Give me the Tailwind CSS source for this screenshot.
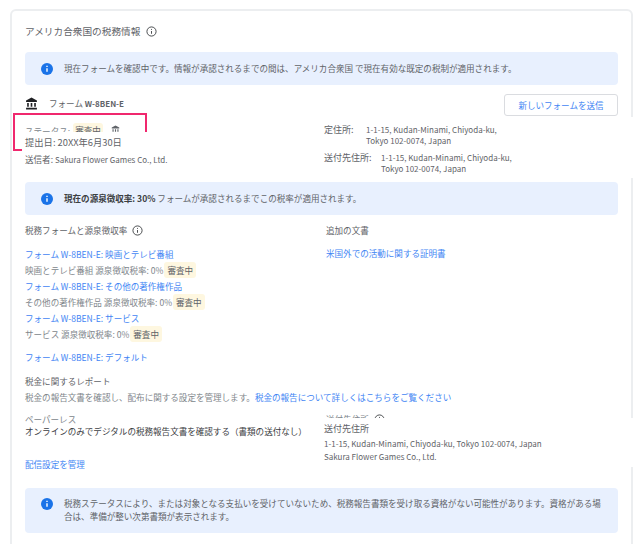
<!DOCTYPE html>
<html lang="ja">
<head>
  <meta charset="UTF-8" />
  <title>税務情報</title>
  <script src="https://cdn.jsdelivr.net/npm/@tailwindcss/browser@4"></script>
</head>
<body class="bg-white h-[544px] overflow-hidden relative text-[#5f6368] text-[8.55px] font-['Noto_Sans_CJK_JP',sans-serif]">

  <div class="absolute left-[13px] top-[113px] w-[134px] h-[38px] border-2 border-[#f0286e] z-10"></div>

  <main class="ml-[10px] mt-[9px] w-[623px] h-[600px] border-2 border-[#eceef0] rounded-[6px] px-[13px] pt-[11px]">
    <div class="flex items-center gap-[6px] h-[18px] text-[9.67px]">
      <h1 class="font-normal">アメリカ合衆国の税務情報</h1>
      <svg class="w-[11px] h-[11px]" viewBox="0 0 12 12" fill="none" stroke="#3c4043"><circle cx="6" cy="6" r="5"/><path d="M6 5.500v3M6 3.200v1"/></svg>
    </div>

    <div class="mt-[12px] h-[33px] bg-[#e8f0fe] rounded-[4px] flex items-center pl-[16px] gap-[11px]">
      <svg class="w-[12px] h-[12px] shrink-0" viewBox="0 0 12 12"><circle cx="6" cy="6" r="6" fill="#1a73e8"/><path d="M6 5.300v3.400M6 2.800v1.200" stroke="#fff" stroke-width="1.400"/></svg>
      <p class="mb-[1px]">現在フォームを確認中です。情報が承認されるまでの間は、アメリカ合衆国 で現在有効な既定の税制が適用されます。</p>
    </div>

    <div class="mt-[9px] flex items-start justify-between h-[22px]">
      <div class="flex items-center gap-[11px] mt-[3px]">
        <svg class="w-[13px] h-[13px]" viewBox="0 0 24 24" fill="#202124"><path d="M12 1 2 6.500V9h20V6.500zM4 11v7h3v-7zM10.500 11v7h3v-7zM17 11v7h3v-7zM2 20v3h20v-3z"/></svg>
        <p>フォーム <span class="font-semibold text-[8px]">W-8BEN-E</span></p>
      </div>
      <button class="w-[114px] h-[22px] border border-[#dadce0] rounded-[3px] bg-white text-[#4285f4]">新しいフォームを送信</button>
    </div>

    <div class="mt-[7px] h-[59px] flex items-start gap-[3px] text-[#80868b]">
      <span class="mt-[2px]">ステータス:</span>
      <span class="bg-[#fef7e0] rounded-[3px] px-[2px] py-[1px] text-[#5f6368]">審査中</span>
      <svg class="w-[9px] h-[9px] ml-[5px] mt-[2px]" viewBox="0 0 24 24" fill="#5f6368"><path d="M12 1 2 6.500V9h20V6.500zM4 11v7h3v-7zM10.500 11v7h3v-7zM17 11v7h3v-7zM2 20v3h20v-3z"/></svg>
    </div>

    <div class="h-[33px] bg-[#e8f0fe] rounded-[4px] flex items-center pl-[16px] gap-[11px]">
      <svg class="w-[12px] h-[12px] shrink-0" viewBox="0 0 12 12"><circle cx="6" cy="6" r="6" fill="#1a73e8"/><path d="M6 5.300v3.400M6 2.800v1.200" stroke="#fff" stroke-width="1.400"/></svg>
      <p><strong class="font-semibold text-[#3c4043]">現在の源泉徴収率: 30%</strong> フォームが承認されるまでこの税率が適用されます。</p>
    </div>

    <div class="mt-[8px] grid grid-cols-[301px_1fr]">
      <div>
        <div class="flex items-center gap-[5px] h-[14px]">
          <span>税務フォームと源泉徴収率</span>
          <svg class="w-[11px] h-[11px]" viewBox="0 0 12 12" fill="none" stroke="#3c4043"><circle cx="6" cy="6" r="5"/><path d="M6 5.500v3M6 3.200v1"/></svg>
        </div>
        <div class="mt-[9px] flex flex-col">
          <a class="h-[16px] leading-[16px] text-[#4285f4]">フォーム W-8BEN-E: 映画とテレビ番組</a>
          <div class="h-[16px] flex items-center gap-[1px] text-[#80868b]">映画とテレビ番組 源泉徴収税率: 0%<span class="bg-[#fef7e0] rounded-[3px] px-[3px] py-[2px] text-[#5f6368]">審査中</span></div>
          <a class="h-[16px] leading-[16px] text-[#4285f4]">フォーム W-8BEN-E: その他の著作権作品</a>
          <div class="h-[16px] flex items-center gap-[1px] text-[#80868b]">その他の著作権作品 源泉徴収税率: 0%<span class="bg-[#fef7e0] rounded-[3px] px-[3px] py-[2px] text-[#5f6368]">審査中</span></div>
          <a class="h-[16px] leading-[16px] text-[#4285f4]">フォーム W-8BEN-E: サービス</a>
          <div class="h-[16px] flex items-center gap-[1px] text-[#80868b]">サービス 源泉徴収税率: 0%<span class="bg-[#fef7e0] rounded-[3px] px-[3px] py-[2px] text-[#5f6368]">審査中</span></div>
          <a class="mt-[7px] h-[16px] leading-[16px] text-[#4285f4]">フォーム W-8BEN-E: デフォルト</a>
        </div>
      </div>
      <div>
        <div class="h-[14px] leading-[14px]">追加の文書</div>
        <a class="block mt-[8px] h-[16px] leading-[16px] text-[#4285f4]">米国外での活動に関する証明書</a>
      </div>
    </div>

    <div class="mt-[9px]">
      <h2 class="font-normal text-[#5f6368] h-[14px] leading-[14px]">税金に関するレポート</h2>
      <p class="mt-[1px] h-[16px] leading-[16px] text-[#80868b]">税金の報告文書を確認し、配布に関する設定を管理します。<a class="text-[#4285f4]">税金の報告について詳しくはこちらをご覧ください</a></p>
    </div>

    <div class="mt-[8px] grid grid-cols-[301px_1fr] h-[48px]">
      <div class="flex flex-col">
        <span class="h-[12px] leading-[12px] text-[#80868b]">ペーパーレス</span>
        <span class="h-[12px] leading-[12px] text-[#3c4043] whitespace-nowrap">オンラインのみでデジタルの税務報告文書を確認する（書類の送付なし）</span>
      </div>
      <div class="flex items-start gap-[5px] text-[#80868b]">
        <span>送付先住所</span>
        <svg class="w-[11px] h-[11px] mt-[1px]" viewBox="0 0 12 12" fill="none" stroke="#3c4043"><circle cx="6" cy="6" r="5"/><path d="M6 5.500v3M6 3.200v1"/></svg>
      </div>
    </div>

    <a class="block -mt-[4px] h-[14px] leading-[14px] text-[#4285f4]">配信設定を管理</a>

    <div class="mt-[17px] h-[45px] bg-[#e8f0fe] rounded-[4px] flex items-start pl-[16px] pt-[9px] gap-[11px]">
      <svg class="w-[12px] h-[12px] shrink-0 mt-[1px]" viewBox="0 0 12 12"><circle cx="6" cy="6" r="6" fill="#1a73e8"/><path d="M6 5.300v3.400M6 2.800v1.200" stroke="#fff" stroke-width="1.400"/></svg>
      <p class="w-[542px] leading-[13px]">税務ステータスにより、または対象となる支払いを受けていないため、税務報告書類を受け取る資格がない可能性があります。資格がある場合は、準備が整い次第書類が表示されます。</p>
    </div>
  </main>

  <!-- patches laid over the page -->
  <div class="absolute left-[22px] top-[132px] w-[200px] h-[34px] bg-white z-20 flex flex-col pl-[3px]">
    <p class="text-[9.3px] leading-[20px] h-[20px]">提出日: 20XX年6月30日</p>
    <p class="leading-[14px]">送信者: <span class="text-[8px]">Sakura Flower Games Co., Ltd.</span></p>
  </div>

  <div class="absolute left-[322px] top-[117px] w-[322px] h-[61px] bg-white z-20 pl-[2px] pt-[6px]">
    <div class="flex">
      <span class="w-[42px] text-[9px] leading-[14px]">定住所:</span>
      <p class="leading-[11px] mt-[1px] text-[8px]">1-1-15, Kudan-Minami, Chiyoda-ku,<br>Tokyo 102-0074, Japan</p>
    </div>
    <div class="flex mt-[5px]">
      <span class="w-[57px] text-[9px] leading-[14px]">送付先住所:</span>
      <p class="leading-[11px] mt-[1px] text-[8px]">1-1-15, Kudan-Minami, Chiyoda-ku,<br>Tokyo 102-0074, Japan</p>
    </div>
  </div>

  <div class="absolute left-[322px] top-[418px] w-[322px] h-[49px] bg-white z-20 pl-[2px] pt-[4px]">
    <p class="text-[9px] leading-[14px]">送付先住所</p>
    <p class="mt-[1px] leading-[13px] text-[8px]">1-1-15, Kudan-Minami, Chiyoda-ku, Tokyo 102-0074, Japan</p>
    <p class="leading-[13px] text-[8px]">Sakura Flower Games Co., Ltd.</p>
  </div>

</body>
</html>
